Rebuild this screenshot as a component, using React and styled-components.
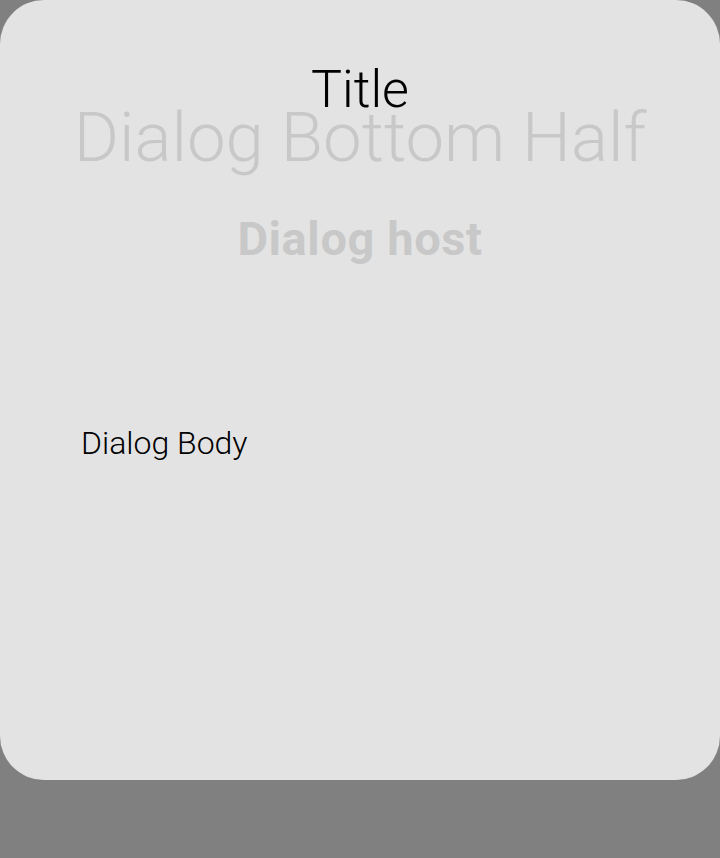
import React from 'react';
import styled, {createGlobalStyle} from 'styled-components';

const GlobalStyle = createGlobalStyle`
  html, body {
    margin: 0;
    padding: 0;
    background: #808080;
    font-family: Roboto, "Noto Sans", sans-serif;
  }
`;

const Screen = styled.div`
  width: 720px;
  height: 858px;
  background: #808080;
`;

const Card = styled.div`
  width: 720px;
  height: 780px;
  box-sizing: border-box;
  background: #e3e3e3;
  border-radius: 44px;
  padding-top: 64px;
  display: flex;
  flex-direction: column;
`;

const Title = styled.div`
  font-size: 52px;
  font-weight: 300;
  line-height: 1;
  color: #000;
  text-align: center;
`;

// faded headings sitting behind the dialog
const FadedHeading = styled.div`
  font-size: ${props => props.size}px;
  font-weight: ${props => props.weight};
  letter-spacing: ${props => props.spacing || 0}px;
  line-height: 1;
  color: #c8c8c8;
  text-align: center;
  margin-top: ${props => props.gap}px;
  white-space: nowrap;
`;

const Body = styled.div`
  margin-top: 165px;
  padding-left: 81px;
  font-size: 32px;
  font-weight: 300;
  line-height: 1;
  color: #000;
`;

export default function App() {
    return (
        <Screen>
            <GlobalStyle/>
            <Card>
                <Title>Title</Title>
                <FadedHeading size={69} weight={300} gap={-13}>Dialog Bottom Half</FadedHeading>
                <FadedHeading size={47} weight={700} gap={43} spacing={0.6}>Dialog host</FadedHeading>
                <Body>Dialog Body</Body>
            </Card>
        </Screen>
    );
}
